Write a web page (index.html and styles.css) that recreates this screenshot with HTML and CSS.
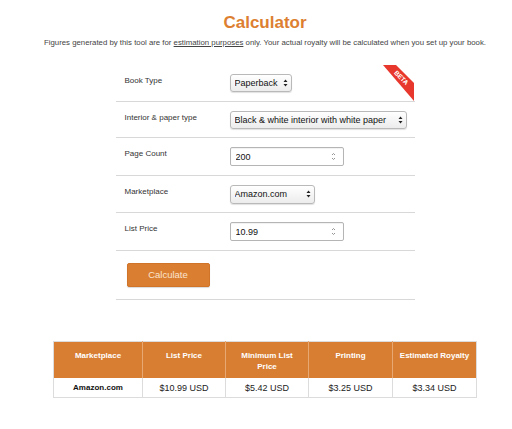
FILE: index.html
```html
<!DOCTYPE html>
<html>
<head>
<meta charset="utf-8">
<title>Calculator</title>
<link rel="stylesheet" href="styles.css">
</head>
<body>
<div class="page">
  <h1 class="title">Calculator</h1>
  <p class="intro">Figures generated by this tool are for <a href="#" class="intro-link">estimation purposes</a> only. Your actual royalty will be calculated when you set up your book.</p>

  <div class="panel">
    <svg class="beta" width="31" height="37" viewBox="0 0 31 37">
      <polygon points="0,0 13,0 31,18 31,36" fill="#e8372c"/>
      <text x="18.5" y="12.5" transform="rotate(45 18.5 12.5)" text-anchor="middle" dominant-baseline="central" class="beta-text">BETA</text>
    </svg>

    <div class="row">
      <div class="label">Book Type</div>
      <div class="select-wrap">
        <select class="select select-sm"><option>Paperback</option></select>
        <svg class="updown" width="5" height="8" viewBox="0 0 5 8"><path d="M2.5 0.5 L4.5 3 H0.5 Z M2.5 7.5 L4.5 5 H0.5 Z" fill="#222"/></svg>
      </div>
    </div>

    <div class="row">
      <div class="label">Interior &amp; paper type</div>
      <div class="select-wrap">
        <select class="select select-lg"><option>Black &amp; white interior with white paper</option></select>
        <svg class="updown" width="5" height="8" viewBox="0 0 5 8"><path d="M2.5 0.5 L4.5 3 H0.5 Z M2.5 7.5 L4.5 5 H0.5 Z" fill="#222"/></svg>
      </div>
    </div>

    <div class="row">
      <div class="label">Page Count</div>
      <div class="input-wrap">
        <input class="input" type="text" value="200">
        <svg class="spin" width="5" height="9" viewBox="0 0 5 9"><path d="M1 3 L2.5 1.5 L4 3 M1 6 L2.5 7.5 L4 6" fill="none" stroke="#888" stroke-width="0.9"/></svg>
      </div>
    </div>

    <div class="row">
      <div class="label">Marketplace</div>
      <div class="select-wrap">
        <select class="select select-md"><option>Amazon.com</option></select>
        <svg class="updown" width="5" height="8" viewBox="0 0 5 8"><path d="M2.5 0.5 L4.5 3 H0.5 Z M2.5 7.5 L4.5 5 H0.5 Z" fill="#222"/></svg>
      </div>
    </div>

    <div class="row">
      <div class="label">List Price</div>
      <div class="input-wrap">
        <input class="input" type="text" value="10.99">
        <svg class="spin" width="5" height="9" viewBox="0 0 5 9"><path d="M1 3 L2.5 1.5 L4 3 M1 6 L2.5 7.5 L4 6" fill="none" stroke="#888" stroke-width="0.9"/></svg>
      </div>
    </div>

    <div class="row row-btn">
      <button class="btn" type="button">Calculate</button>
    </div>
  </div>

  <table class="results">
    <colgroup>
      <col class="c1"><col class="c2"><col class="c3"><col class="c4"><col class="c5">
    </colgroup>
    <thead>
      <tr>
        <th>Marketplace</th>
        <th>List Price</th>
        <th>Minimum List Price</th>
        <th>Printing</th>
        <th>Estimated Royalty</th>
      </tr>
    </thead>
    <tbody>
      <tr>
        <td class="market">Amazon.com</td>
        <td>$10.99 USD</td>
        <td>$5.42 USD</td>
        <td>$3.25 USD</td>
        <td>$3.34 USD</td>
      </tr>
    </tbody>
  </table>
</div>
</body>
</html>
```

FILE: styles.css
```css
* { box-sizing: border-box; }

html, body {
  margin: 0;
  padding: 0;
  background: #ffffff;
}

body {
  font-family: "Liberation Sans", Arial, Helvetica, sans-serif;
  color: #333333;
}

.page {
  padding-left: 18px;
  padding-bottom: 20px;
}

.title {
  margin: 13px 0 0;
  font-size: 17px;
  line-height: 20px;
  font-weight: bold;
  color: #dd7f31;
  text-align: center;
}

.intro {
  margin: 4px 0 0;
  font-size: 7.8px;
  line-height: 12px;
  color: #444444;
  text-align: center;
}

.intro-link {
  color: #444444;
  text-decoration: underline;
}

.panel {
  position: relative;
  width: 299px;
  margin: 16px auto 0;
}

.beta {
  position: absolute;
  top: 0;
  right: 1px;
  display: block;
}

.beta-text {
  font-family: "Liberation Sans", Arial, sans-serif;
  font-size: 6.5px;
  font-weight: bold;
  fill: #ffffff;
}

.row {
  display: flex;
  align-items: flex-start;
  padding: 9px 0 8.5px;
  border-bottom: 1px solid #d8d8d8;
}

.label {
  width: 114px;
  flex: none;
  padding: 1px 0 0 9px;
  font-size: 8px;
  line-height: 12px;
  color: #333333;
}

.select-wrap,
.input-wrap {
  position: relative;
  display: flex;
}

.select {
  -webkit-appearance: none;
  appearance: none;
  height: 18px;
  margin: 0;
  padding: 0 12px 0 4px;
  font-family: "Liberation Sans", Arial, sans-serif;
  font-size: 9px;
  color: #111111;
  border: 1px solid #b9b9b9;
  border-radius: 3px;
  background: linear-gradient(#ffffff, #ececec);
  box-shadow: 0 1px 1px rgba(0, 0, 0, 0.12);
  outline: none;
}

.select-sm { width: 62px; }
.select-lg { width: 177px; }
.select-md { width: 85px; height: 19px; }

.updown {
  position: absolute;
  right: 4px;
  top: 50%;
  margin-top: -4px;
}

.input {
  width: 114px;
  height: 19px;
  margin: 0;
  padding: 0 14px 0 5px;
  font-family: "Liberation Sans", Arial, sans-serif;
  font-size: 9px;
  color: #111111;
  border: 1px solid #b5b5b5;
  border-radius: 2px;
  background: #ffffff;
  box-shadow: inset 0 1px 1px rgba(0, 0, 0, 0.06);
  outline: none;
}

.spin {
  position: absolute;
  right: 8px;
  top: 5px;
}

.row-btn {
  padding: 12px 0 12px 11px;
}

.btn {
  display: block;
  width: 83px;
  height: 24px;
  margin: 0;
  padding: 0;
  font-family: "Liberation Sans", Arial, sans-serif;
  font-size: 9.5px;
  color: #fbe3cf;
  background: #da7f32;
  border: 1px solid #cf7428;
  border-radius: 2px;
  box-shadow: 0 1px 1px rgba(0, 0, 0, 0.15);
}

.results {
  width: 423px;
  margin: 41px auto 0;
  border-collapse: collapse;
  table-layout: fixed;
  border: 1px solid #dcdcdc;
}

.c1 { width: 89px; }
.c2 { width: 83px; }
.c3 { width: 83px; }
.c4 { width: 84px; }
.c5 { width: 84px; }

.results th {
  background: #d87e33;
  color: #ffffff;
  font-size: 8px;
  font-weight: bold;
  line-height: 11.5px;
  padding: 8px 10px 5px;
  vertical-align: top;
  text-align: center;
  border-left: 1px solid #e7a873;
}

.results th:last-child {
  padding-left: 3px;
  padding-right: 3px;
}

.results th:first-child {
  border-left: none;
}

.results td {
  font-size: 9px;
  line-height: 12px;
  padding: 4px 4px 3px;
  text-align: center;
  color: #222222;
  border-left: 1px solid #dcdcdc;
  background: #ffffff;
}

.results td.market {
  font-weight: bold;
  font-size: 8px;
  color: #111111;
}
```
